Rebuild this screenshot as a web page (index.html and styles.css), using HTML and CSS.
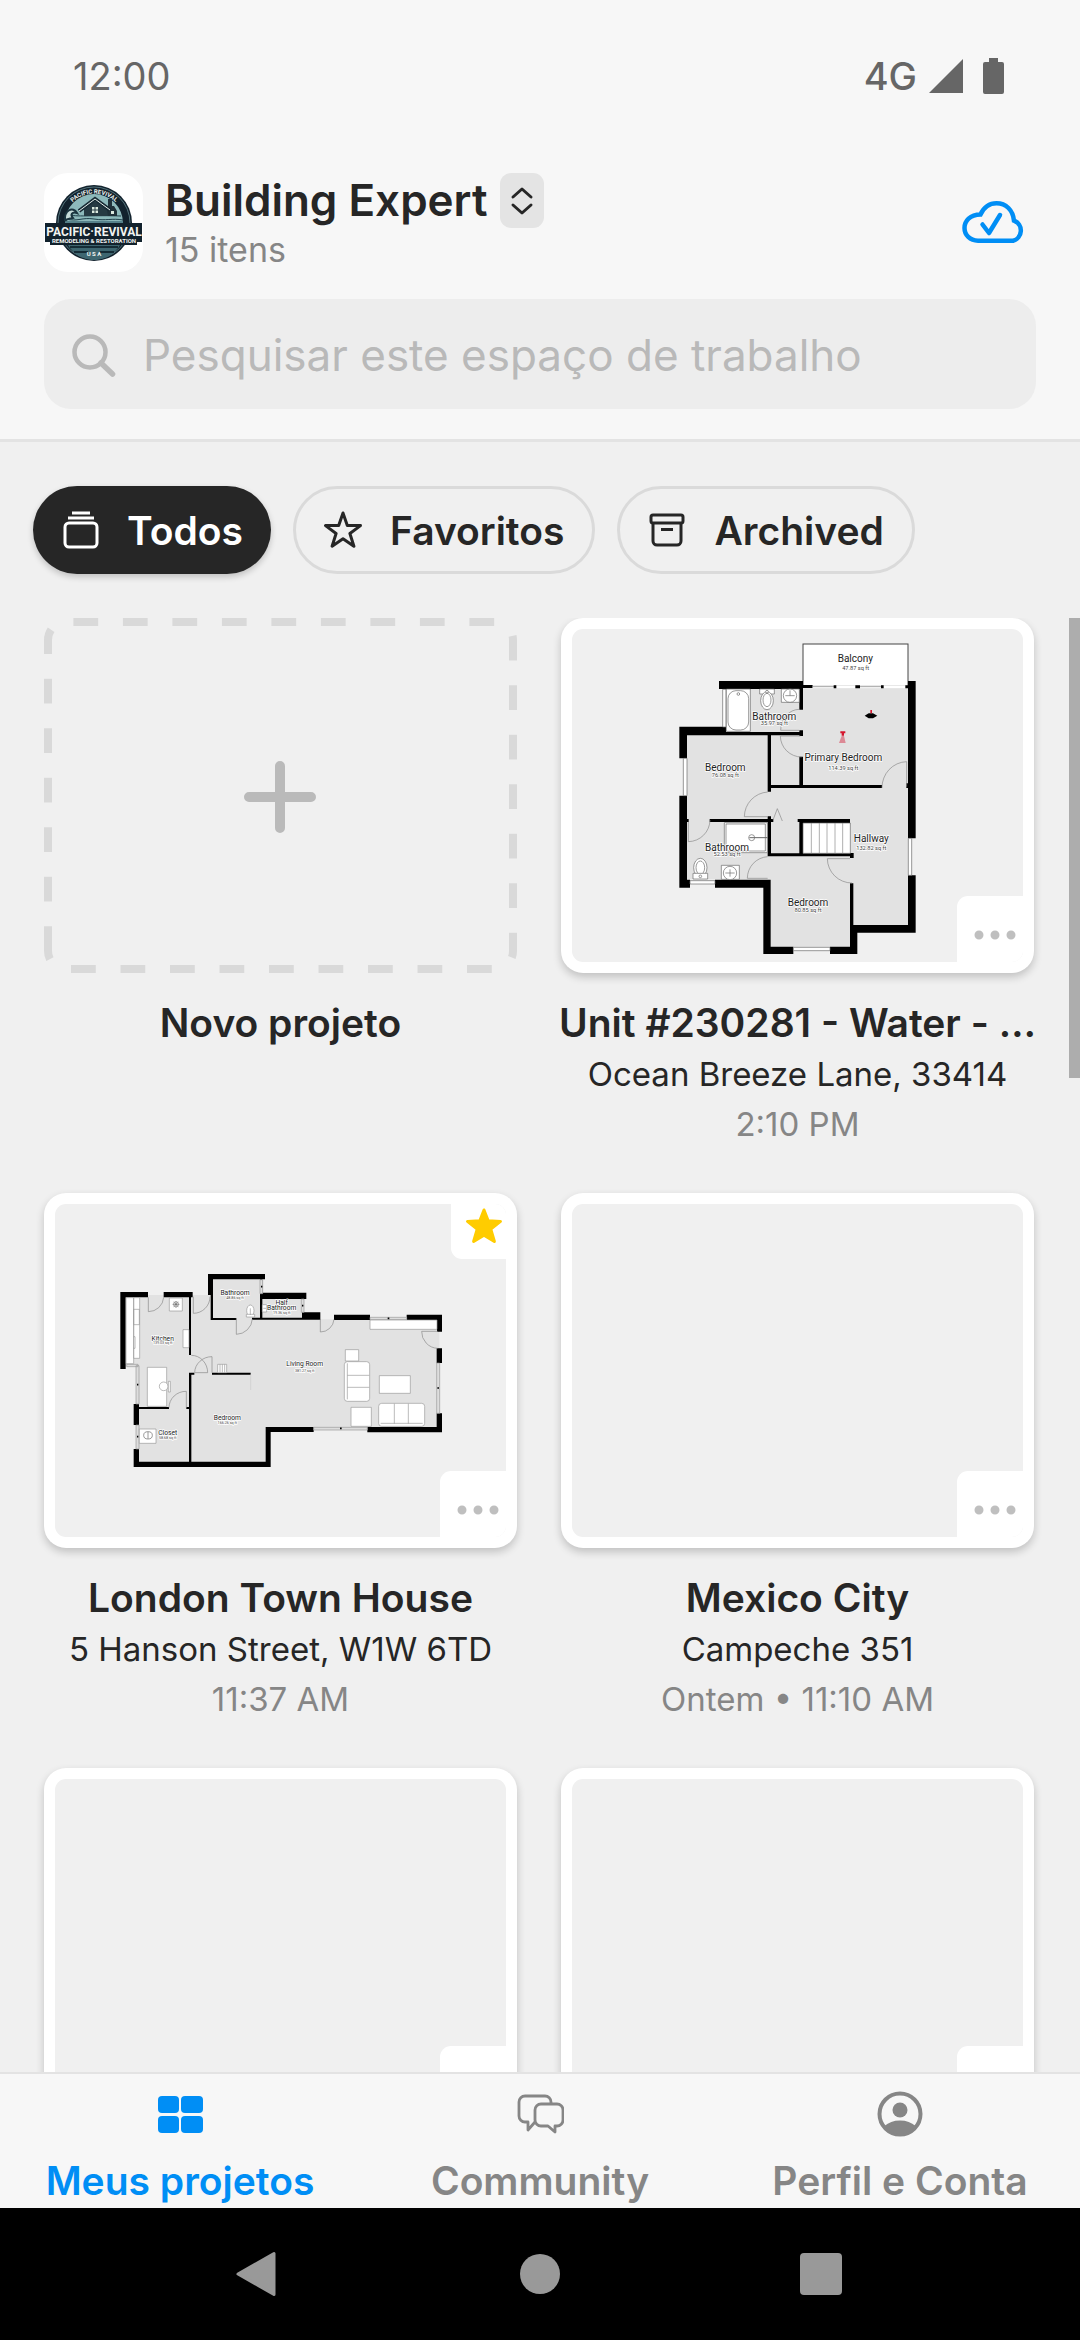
FILE: index.html
```html
<!DOCTYPE html>
<html lang="pt">
<head>
<meta charset="utf-8">
<meta name="viewport" content="width=device-width, initial-scale=1">
<title>Meus projetos</title>
<link rel="stylesheet" href="styles.css">
</head>
<body>
<div class="app">
  <div class="status">
    <span class="status-time">12:00</span>
    <div class="status-icons">
      <span class="network">4G</span>
      <svg class="signal" viewBox="0 0 34 34"><path d="M34 0V34H0Z" fill="#666"/></svg>
      <svg class="battery" viewBox="0 0 21 36"><path d="M6 0h9v4h4a2 2 0 0 1 2 2v28a2 2 0 0 1-2 2H2a2 2 0 0 1-2-2V6a2 2 0 0 1 2-2h4Z" fill="#666"/></svg>
    </div>
  </div>

  <header class="header">
    <div class="workspace">
      <svg class="logo" viewBox="0 0 99 99" role="img" aria-label="Pacific Revival">
        <rect width="99" height="99" fill="#fff"/>
        <circle cx="50" cy="50" r="38" fill="#12222d"/>
        <circle cx="50" cy="50" r="36" fill="none" stroke="#54737b" stroke-width="1"/>
        <circle cx="50" cy="50" r="29" fill="#8db9bb"/>
        <path d="M21 48h58v14H21Z" fill="#56828b"/>
        <path d="M22 46c12 3 16-2 28 0s18-1 29 1M24 42c14 2 24 0 53 1" fill="none" stroke="#20404b" stroke-width="1"/>
        <path d="M21 48c-1-11 8-15 12-8-5-2-7 2-4 5-3 1-6 0-8 3" fill="#c6dcda" stroke="#1b3540" stroke-width="2"/>
        <path d="M40 35 51 28l13 9v6H40Z" fill="#263a43"/>
        <path d="M62 33h8l3 5v5h-9ZM64 26h4v7h-4Z" fill="#20313a"/>
        <path d="M35 38 51 26l15 11" fill="none" stroke="#172a34" stroke-width="4"/>
        <path d="M35 38 51 26l15 11" fill="none" stroke="#e6efec" stroke-width="1"/>
        <path d="M48 34h6v6h-6ZM67 38h3v3h-3Z" fill="#dce9df"/>
        <path d="M51 34v6M48 37h6" stroke="#263a43" stroke-width="1"/>
        <path d="M22 68h56c-4 10-14 19-28 19S26 78 22 68Z" fill="#3e6670"/>
        <path d="M26 74h48M30 79h14m12 0h14" stroke="#152c36" stroke-width="2"/>
        <path id="arc" d="M20.500 42A31 31 0 0 1 79.500 42" fill="none"/>
        <text class="logo-arc"><textPath href="#arc" startOffset="50%">PACIFIC REVIVAL</textPath></text>
        <path d="M1 50h97v19h-5v3H6v-3H1Z" fill="#12222d"/>
        <text class="logo-name" x="50" y="63">PACIFIC·REVIVAL</text>
        <text class="logo-tag" x="50" y="70">REMODELING &amp; RESTORATION</text>
        <text class="logo-tag" x="50" y="83">U S A</text>
      </svg>
      <div class="workspace-text">
        <div class="workspace-line">
          <h1>Building Expert</h1>
          <button class="switcher" aria-label="Trocar espaço de trabalho">
            <svg viewBox="0 0 38 55"><path d="M10 24l9-8 9 8M10 32l9 8 9-8" fill="none" stroke="#262626" stroke-width="3" stroke-linecap="round" stroke-linejoin="round"/></svg>
          </button>
        </div>
        <p>15 itens</p>
      </div>
      <button class="cloud" aria-label="Sincronizado">
        <svg viewBox="0 0 64 44"><path d="M16 39.700H51a10.500 10.500 0 0 0 1-20C51 9 44 2.300 34.500 2.300c-8 0-13 4.700-16 11.200C8 13.500 2.500 20 2.500 27c0 7 5.500 12.700 13.500 12.700Z" fill="none" stroke="#008ef5" stroke-width="4.500"/><path d="m20.500 23.500 6.500 8.500L38 14" fill="none" stroke="#008ef5" stroke-width="4.500" stroke-linecap="round" stroke-linejoin="round"/></svg>
      </button>
    </div>
    <label class="search">
      <svg viewBox="0 0 44 44"><circle cx="18" cy="19" r="15.500" fill="none" stroke="#b9b9b9" stroke-width="4.500"/><path d="m29 30 11.500 11" stroke="#b9b9b9" stroke-width="5.500" stroke-linecap="round"/></svg>
      <input type="search" placeholder="Pesquisar este espaço de trabalho" aria-label="Pesquisar">
    </label>
  </header>

  <div class="chips">
    <button class="chip chip-active">
      <svg viewBox="0 0 38 38"><rect x="4" y="12" width="32" height="24" rx="4" fill="none" stroke="#fff" stroke-width="3"/><path d="M7 7h26M11 2h18" stroke="#fff" stroke-width="3"/></svg>
      Todos
    </button>
    <button class="chip">
      <svg viewBox="0 0 38 38"><path d="m19 2 4.300 12.400 13.200.2-10.600 7.900 4 12.700L19 27.700 8.100 35.200l4-12.700L1.500 14.600l13.200-.2Z" fill="none" stroke="#262626" stroke-width="3" stroke-linejoin="round"/></svg>
      Favoritos
    </button>
    <button class="chip">
      <svg viewBox="0 0 38 38"><rect x="3" y="4" width="32" height="8" rx="2" fill="none" stroke="#262626" stroke-width="3"/><path d="M5 12v18a4 4 0 0 0 4 4h20a4 4 0 0 0 4-4V12M13 18.500h12" fill="none" stroke="#262626" stroke-width="3"/></svg>
      Archived
    </button>
  </div>

  <main class="scroll">
    <div class="scroll-thumb"></div>
    <div class="grid">
      <article class="project">
        <button class="new" aria-label="Novo projeto">
          <svg viewBox="0 0 473 355"><path d="M4 333V22A18 18 0 0 1 22 4H451A18 18 0 0 1 469 22V333A18 18 0 0 1 451 351H22A18 18 0 0 1 4 333" fill="none" stroke="#d9d9d9" stroke-width="8" stroke-dasharray="24.750 24.750"/><path d="M205 179h62M236 148v62" stroke="#bababa" stroke-width="10" stroke-linecap="round"/></svg>
        </button>
        <h2>Novo projeto</h2>
      </article>

      <article class="project">
        <div class="card">
          <div class="thumb">
            <svg class="plan" viewBox="-264 27 1353 999" role="img" aria-label="Planta">
              <path d="M198 205H745V915H580V980H332V778H80V345H198Z" fill="#e2e2e2"/>
              <rect x="429" y="72" width="315" height="126" fill="#fff" stroke="#444" stroke-width="3"/>
              <g fill="#000">
                <path d="M177 183H429V207H177ZM418 195h40v9h-40ZM418 195h11v74h-11ZM58 320H198V346H81V415H58ZM190 336H429V346H190ZM418 331h11v17h-11ZM58 527H81V779H90V803H58ZM165 779H332V980H400V1002H310V803H165ZM510 980H570V790H580V915H744V766H767V938H592V1002H510ZM744 183H767V655H744ZM323 340H333V515H323ZM418 410H429V495H666V504H333V495H418ZM739 490h8v14h-8ZM149 597H323V589H333V597H340V606H333V700H570V699H581V714H570V709H323V606H149ZM80 597h6v9h-6ZM413 597H570V609H429V700H418V606H413Z"/>
              </g>
              <path d="M458 200H742" stroke="#fff" stroke-width="8"/><path d="M458 200h66m72 0h70" stroke="#777" stroke-width="2"/>
              <path d="M521 200h8m134 0h8m65 0h8m-158 0h14" stroke="#000" stroke-width="9"/>
              <g fill="#fff" stroke="#666" stroke-width="2">
                <path d="M188 208h10v113h-10ZM70 415h11v112h-11ZM90 782h75v10H90ZM400 982h110v10H400ZM745 655h10v111h-10Z"/>
                <path d="M199 207h72v127h-72Z"/><rect x="204" y="212" width="62" height="118" rx="24"/><circle cx="235" cy="222" r="4"/>
                <path d="M364 207h54v40h-54Z"/><circle cx="390" cy="227" r="20"/><path d="M376 227h28M390 211v16" fill="none"/>
                <path d="M299 207h44v15h-44Z"/><ellipse cx="321" cy="242" rx="19" ry="27"/><ellipse cx="321" cy="240" rx="12" ry="20"/><circle cx="321" cy="215" r="4"/>
                <path d="M429 609h142v91H429Z"/><path d="M454 609v91M478 609v91M501 609v91M525 609v91M548 609v91" fill="none" stroke="#888"/>
                <path d="M193 608h129v90H193Z"/><path d="M198 612h118v81H198Z"/><circle cx="275" cy="653" r="9"/><path d="M268 653h55" stroke-width="3"/>
                <path d="M184 736h54v42h-54Z"/><circle cx="210" cy="759" r="20"/><path d="M196 759h28M210 748v22" fill="none"/>
                <ellipse cx="121" cy="743" rx="20" ry="28"/><ellipse cx="121" cy="743" rx="13" ry="20"/><path d="M99 760h44v17H99Z"/><circle cx="121" cy="769" r="4"/>
              </g>
              <g fill="none" stroke="#888" stroke-width="2">
                <path d="M418 268A56 64 0 0 0 362 331H418M361 348A64 64 0 0 0 425 411M361 348h60M666 504A76 78 0 0 1 740 425V500M323 516A75 75 0 0 0 253 590H323M85 606V665A66 66 0 0 0 150 600M323 710A65 65 0 0 0 262 775H323M570 716H502A74 74 0 0 0 576 789M339 600l13-34 15 37"/>
              </g>
              <path d="m614 287 12-7h13l13 7-13 8h-13Z"/><path d="M631 270h5v10h-5ZM541 334h15v6h-4v7h-7v-7h-4Z" fill="#d5172f"/><path d="M545 348h7l5 21h-20Z" fill="#dc8995"/>
              <g class="room"><text x="586" y="125">Balcony</text><text x="343" y="300">Bathroom</text><text x="550" y="422">Primary Bedroom</text><text x="196" y="452">Bedroom</text><text x="201" y="692">Bathroom</text><text x="634" y="665">Hallway</text><text x="444" y="857">Bedroom</text></g>
              <g class="area"><text x="587" y="150">47.87 sq ft</text><text x="343" y="315">35.97 sq ft</text><text x="550" y="449">114.39 sq ft</text><text x="196" y="470">76.08 sq ft</text><text x="201" y="708">52.53 sq ft</text><text x="634" y="690">132.82 sq ft</text><text x="444" y="876">80.85 sq ft</text></g>
            </svg>
            <button class="more" aria-label="Mais opções"><svg viewBox="0 0 66 66"><path d="M22 39h0M38 39h0M54 39h0" stroke="#bfbfbf" stroke-width="9" stroke-linecap="round"/></svg></button>
          </div>
        </div>
        <h2>Unit #230281 - Water - …</h2>
        <p class="address">Ocean Breeze Lane, 33414</p>
        <p class="time">2:10 PM</p>
      </article>

      <article class="project">
        <div class="card">
          <div class="thumb">
            <svg class="plan" viewBox="-135 -138 1353 999" role="img" aria-label="Planta">
              <path d="M77 135H338V87H483V142H606V208H1018V535H497V636H115V345H77Z" fill="#e2e2e2"/>
              <g fill="#000">
                <path d="M324 72H495V88H339V204H409V210H332V135H324ZM61 126H144V142H77V357H61ZM191 126H278V142H191ZM481 128H619V147H481ZM456 203H606V187H661V209H456ZM480 88H487V208H480ZM702 194H810V210H702ZM920 194H1026V245H1011V210H920ZM1010 295h16v44h-16ZM1010 490h16v57H802V531H1010ZM497 531H641V546H512V651H101V597H117V635H497ZM101 462H117V471H207V477H117V525H101ZM267 142H273V315H267ZM267 368H283V374H274V635H267V477H259V471H267ZM336 368H452V374H336Z"/>
              </g>
              <g fill="#ddd" stroke="#999" stroke-width="2">
                <path d="M480 89h8v42h-8ZM604 147h8v40h-8ZM810 202h110v7H810ZM1010 339h9v151h-9ZM641 532h161v8H641ZM108 347h9v115h-9ZM108 525h9v72h-9ZM80 343h34v7H80Z"/>
              </g>
              <path d="M863 205h5M1012 414h5M720 535h5M111 404h4M111 560h4M483 110h4M606 167h4" stroke="#000" stroke-width="5"/>
              <g fill="#fff" stroke="#999" stroke-width="2">
                <path d="M78 143h23v198H78ZM101 143h18v182h-18ZM101 178h17v46h-17ZM208 144h39v39h-39ZM249 239h18v54h-18ZM142 352h58v117h-58ZM118 537h50v43h-50ZM810 210h201v28H810ZM736 299h40v34h-40ZM838 377h93v53h-93ZM753 472h61v57h-61Z"/>
                <rect x="733" y="335" width="76" height="119" rx="9"/><path d="M742 340v108M742 376h66M742 412h66" fill="none"/>
                <rect x="836" y="460" width="138" height="69" rx="9"/><path d="M883 461v60M925 461v60M842 520h126" fill="none"/>
                <path d="M353 343h27v25h-27ZM360 343v25M367 343v25M374 343v25"/>
                <ellipse cx="191" cy="409" rx="13" ry="13"/><path d="M205 394h6v32h-6Z"/>
                <ellipse cx="144" cy="556" rx="13" ry="11" stroke="#666"/><path d="M144 546v20" stroke="#666"/>
                <ellipse cx="451" cy="182" rx="11" ry="17"/><path d="M439 193h25v8h-25ZM451 175v20M487 164h13v22h-13ZM490 175h8M101 260h4v35h-4Z"/>
                <circle cx="228" cy="163" r="8"/><path d="M218 163h20M228 153v20M221 156l14 14M235 156l-14 14" stroke="#666"/>
              </g>
              <g fill="none" stroke="#888" stroke-width="2">
                <path d="M145 142V185A46 46 0 0 0 191 142M280 140V190A50 50 0 0 0 330 140M409 205V253A49 49 0 0 0 457 207M661 207V246A41 41 0 0 0 702 208M1014 244H965A50 50 0 0 0 1013 295M274 316A49 52 0 0 1 323 368H284M284 368A52 49 0 0 1 336 320V368M207 473A51 49 0 0 1 259 424V473"/><path d="M452 374v46" stroke="#ccc"/>
              </g>
              <g class="room room-small"><text x="405" y="135">Bathroom</text><text x="545" y="164">Half</text><text x="545" y="180">Bathroom</text><text x="188" y="272">Kitchen</text><text x="614" y="348">Living Room</text><text x="382" y="510">Bedroom</text><text x="203" y="555">Closet</text></g>
              <g class="area area-small"><text x="405" y="148">48.86 sq ft</text><text x="545" y="193">19.36 sq ft</text><text x="188" y="283">139.03 sq ft</text><text x="614" y="366">381.27 sq ft</text><text x="382" y="522">166.26 sq ft</text><text x="203" y="567">58.68 sq ft</text></g>
            </svg>
            <span class="favorite"><svg viewBox="0 0 38 36"><path d="m19 2 4.200 10.700 12.300.7-9.700 7.800 3.600 12.300L19 27.200 8.600 33.500l3.600-12.300-9.700-7.800 12.300-.7Z" fill="#fc0" stroke="#fc0" stroke-width="3" stroke-linejoin="round"/></svg></span>
            <button class="more" aria-label="Mais opções"><svg viewBox="0 0 66 66"><path d="M22 39h0M38 39h0M54 39h0" stroke="#bfbfbf" stroke-width="9" stroke-linecap="round"/></svg></button>
          </div>
        </div>
        <h2>London Town House</h2>
        <p class="address">5 Hanson Street, W1W 6TD</p>
        <p class="time">11:37 AM</p>
      </article>

      <article class="project">
        <div class="card">
          <div class="thumb">
            <button class="more" aria-label="Mais opções"><svg viewBox="0 0 66 66"><path d="M22 39h0M38 39h0M54 39h0" stroke="#bfbfbf" stroke-width="9" stroke-linecap="round"/></svg></button>
          </div>
        </div>
        <h2>Mexico City</h2>
        <p class="address">Campeche 351</p>
        <p class="time">Ontem • 11:10 AM</p>
      </article>

      <article class="project">
        <div class="card"><div class="thumb"><button class="more" aria-label="Mais opções"></button></div></div>
      </article>
      <article class="project">
        <div class="card"><div class="thumb"><button class="more" aria-label="Mais opções"></button></div></div>
      </article>
    </div>
  </main>

  <nav class="tabs">
    <a class="tab tab-active" href="#projetos">
      <svg viewBox="0 0 48 48"><g fill="#008ef5"><rect x="2" y="6" width="21" height="17" rx="4"/><rect x="25" y="6" width="22" height="17" rx="4"/><rect x="2" y="26" width="21" height="17" rx="4"/><rect x="25" y="26" width="22" height="17" rx="4"/></g></svg>
      Meus projetos
    </a>
    <a class="tab" href="#community">
      <svg viewBox="0 0 48 48"><g fill="none" stroke="#868686" stroke-width="2.800" stroke-linejoin="round"><path d="M19 32l-7 8v-8H9a6 6 0 0 1-6-6V12a6 6 0 0 1 6-6h20a6 6 0 0 1 6 6v2"/><path d="M25 14h16a6 6 0 0 1 6 6v10a6 6 0 0 1-6 6h-2v6l-7-6h-7a6 6 0 0 1-6-6V20a6 6 0 0 1 6-6Z"/></g></svg>
      Community
    </a>
    <a class="tab" href="#perfil">
      <svg viewBox="0 0 48 48"><circle cx="24" cy="24" r="20.500" fill="none" stroke="#868686" stroke-width="4"/><circle cx="24" cy="20" r="7.500" fill="#868686"/><path d="M8.500 36c4-3.500 9-5.500 15.500-5.500s11.500 2 15.500 5.500C36 41 31 44 24 44S12 41 8.500 36Z" fill="#868686"/></svg>
      Perfil e Conta
    </a>
  </nav>

  <div class="system">
    <button aria-label="Voltar"><svg viewBox="0 0 46 46"><path d="M38 2.500v41L2 23Z" fill="#999" stroke="#999" stroke-width="3" stroke-linejoin="round"/></svg></button>
    <button aria-label="Início"><svg viewBox="0 0 46 46"><circle cx="23" cy="23" r="20" fill="#999"/></svg></button>
    <button aria-label="Recentes"><svg viewBox="0 0 46 46"><rect x="2" y="2" width="42" height="42" rx="4" fill="#999"/></svg></button>
  </div>
</div>
</body>
</html>
```
FILE: styles.css
```css
* { box-sizing: border-box; }

body {
  margin: 0;
  background: #f0f0f0;
  color: #262626;
  font-family: Inter, "Liberation Sans", sans-serif;
}

h1, h2, p { margin: 0; }

button {
  padding: 0;
  border: 0;
  background: none;
  color: inherit;
  font: inherit;
}

svg { display: block; }

.app {
  display: flex;
  flex-direction: column;
  height: 100vh;
}

.status {
  display: flex;
  justify-content: space-between;
  align-items: center;
  padding: 51px 76px 0 73px;
  background: #f7f7f7;
  color: #666;
  font-size: 38px;
  line-height: 50px;
}

.status-icons {
  display: flex;
  align-items: center;
  gap: 12px;
}

.network { font-weight: 500; }
.signal { width: 34px; height: 34px; }
.battery { width: 21px; height: 36px; margin-left: 8px; }

.header {
  padding: 72px 44px 30px;
  border-bottom: 3px solid #e3e3e3;
  background: #f7f7f7;
}

.workspace {
  display: flex;
  align-items: center;
}

.logo {
  width: 99px;
  height: 99px;
  margin-right: 22px;
  border-radius: 24px;
}

.logo text {
  fill: #f2f5f2;
  font-family: Roboto, sans-serif;
  font-weight: 700;
  text-anchor: middle;
}

.logo .logo-arc { font-size: 6px; }
.logo .logo-name { font-size: 12px; }
.logo .logo-tag { font-size: 6px; }

.workspace-text { flex: 1; }

.workspace-line {
  display: flex;
  align-items: center;
  gap: 13px;
}

.workspace h1 {
  font-size: 44px;
  font-weight: 600;
  line-height: 55px;
}

.workspace p {
  color: #868686;
  font-size: 34px;
  line-height: 44px;
}

.switcher {
  width: 44px;
  height: 55px;
  border-radius: 11px;
  background: #e4e4e4;
}

.switcher svg { height: 55px; margin: 0 auto; }

.cloud { margin-right: 10px; }
.cloud svg { width: 64px; height: 44px; }

.search {
  display: flex;
  align-items: center;
  gap: 27px;
  height: 110px;
  margin-top: 27px;
  padding: 2px 28px 0;
  border-radius: 27px;
  background: #ededed;
}

.search svg { width: 44px; height: 44px; }

.search input {
  flex: 1;
  min-width: 0;
  padding: 0;
  border: 0;
  outline: 0;
  background: none;
  color: #262626;
  font: 400 44px/55px Inter, "Liberation Sans", sans-serif;
}

.search input::placeholder { color: #b9b9b9; opacity: 1; }

.chips {
  display: flex;
  gap: 22px;
  padding: 44px 33px;
}

.chip {
  display: flex;
  align-items: center;
  gap: 28px;
  height: 88px;
  padding: 0 28px;
  border: 3px solid #dadada;
  border-radius: 44px;
  font-size: 39px;
  font-weight: 600;
}

.chip svg { width: 38px; height: 38px; }

.chip-active {
  border: 0;
  background: #262626;
  color: #fff;
  box-shadow: 0 3px 6px rgba(0, 0, 0, 0.2);
}

.scroll {
  position: relative;
  flex: 1;
  min-height: 0;
  overflow: hidden;
}

.scroll-thumb {
  position: absolute;
  top: 0;
  right: 0;
  width: 11px;
  height: 460px;
  background: #adadad;
}

.grid {
  display: grid;
  grid-template-columns: repeat(2, minmax(0, 1fr));
  gap: 44px;
  padding: 0 46px 44px 44px;
}

.project { text-align: center; }

.new { display: block; width: 100%; }

.card {
  display: flex;
  aspect-ratio: 473 / 355;
  padding: 11px;
  border-radius: 22px;
  background: #fff;
  box-shadow: 0 4px 8px rgba(0, 0, 0, 0.2);
}

.thumb {
  position: relative;
  flex: 1;
  overflow: hidden;
  border-radius: 11px;
  background: #f0f0f0;
}

.plan { width: 100%; height: 100%; }

.plan text {
  font-family: Roboto, sans-serif;
  text-anchor: middle;
  stroke: #fff;
  stroke-width: 4px;
  paint-order: stroke;
}

.room { font-size: 30px; fill: #222; }
.area { font-size: 17px; fill: #444; }
.room-small { font-size: 20px; }
.area-small { font-size: 11px; }

.more {
  position: absolute;
  right: 0;
  bottom: 0;
  width: 66px;
  height: 66px;
  border-top-left-radius: 11px;
  background: #fff;
}

.favorite {
  position: absolute;
  top: 0;
  right: 0;
  width: 55px;
  height: 55px;
  padding: 4px 0 0 14px;
  border-bottom-left-radius: 11px;
  background: #fff;
}

.favorite svg { width: 38px; height: 36px; }

.project h2 {
  margin: 25px -6px 0;
  font-size: 39px;
  font-weight: 600;
  line-height: 50px;
  white-space: nowrap;
}

.address {
  margin-top: 1px;
  font-size: 33px;
  line-height: 50px;
}

.time {
  color: #868686;
  font-size: 33px;
  line-height: 50px;
}

.tabs {
  display: grid;
  grid-template-columns: repeat(3, 1fr);
  border-top: 2px solid #e3e3e3;
  background: #f7f7f7;
}

.tab {
  display: flex;
  flex-direction: column;
  align-items: center;
  gap: 18px;
  padding: 16px 0 2px;
  color: #868686;
  font-size: 39px;
  font-weight: 600;
  line-height: 50px;
  text-decoration: none;
}

.tab svg { width: 48px; height: 48px; }
.tab-active { color: #008ef5; }

.system {
  display: flex;
  justify-content: space-between;
  align-items: center;
  height: 132px;
  padding: 0 236px;
  background: #000;
}

.system svg { width: 46px; height: 46px; }
```
